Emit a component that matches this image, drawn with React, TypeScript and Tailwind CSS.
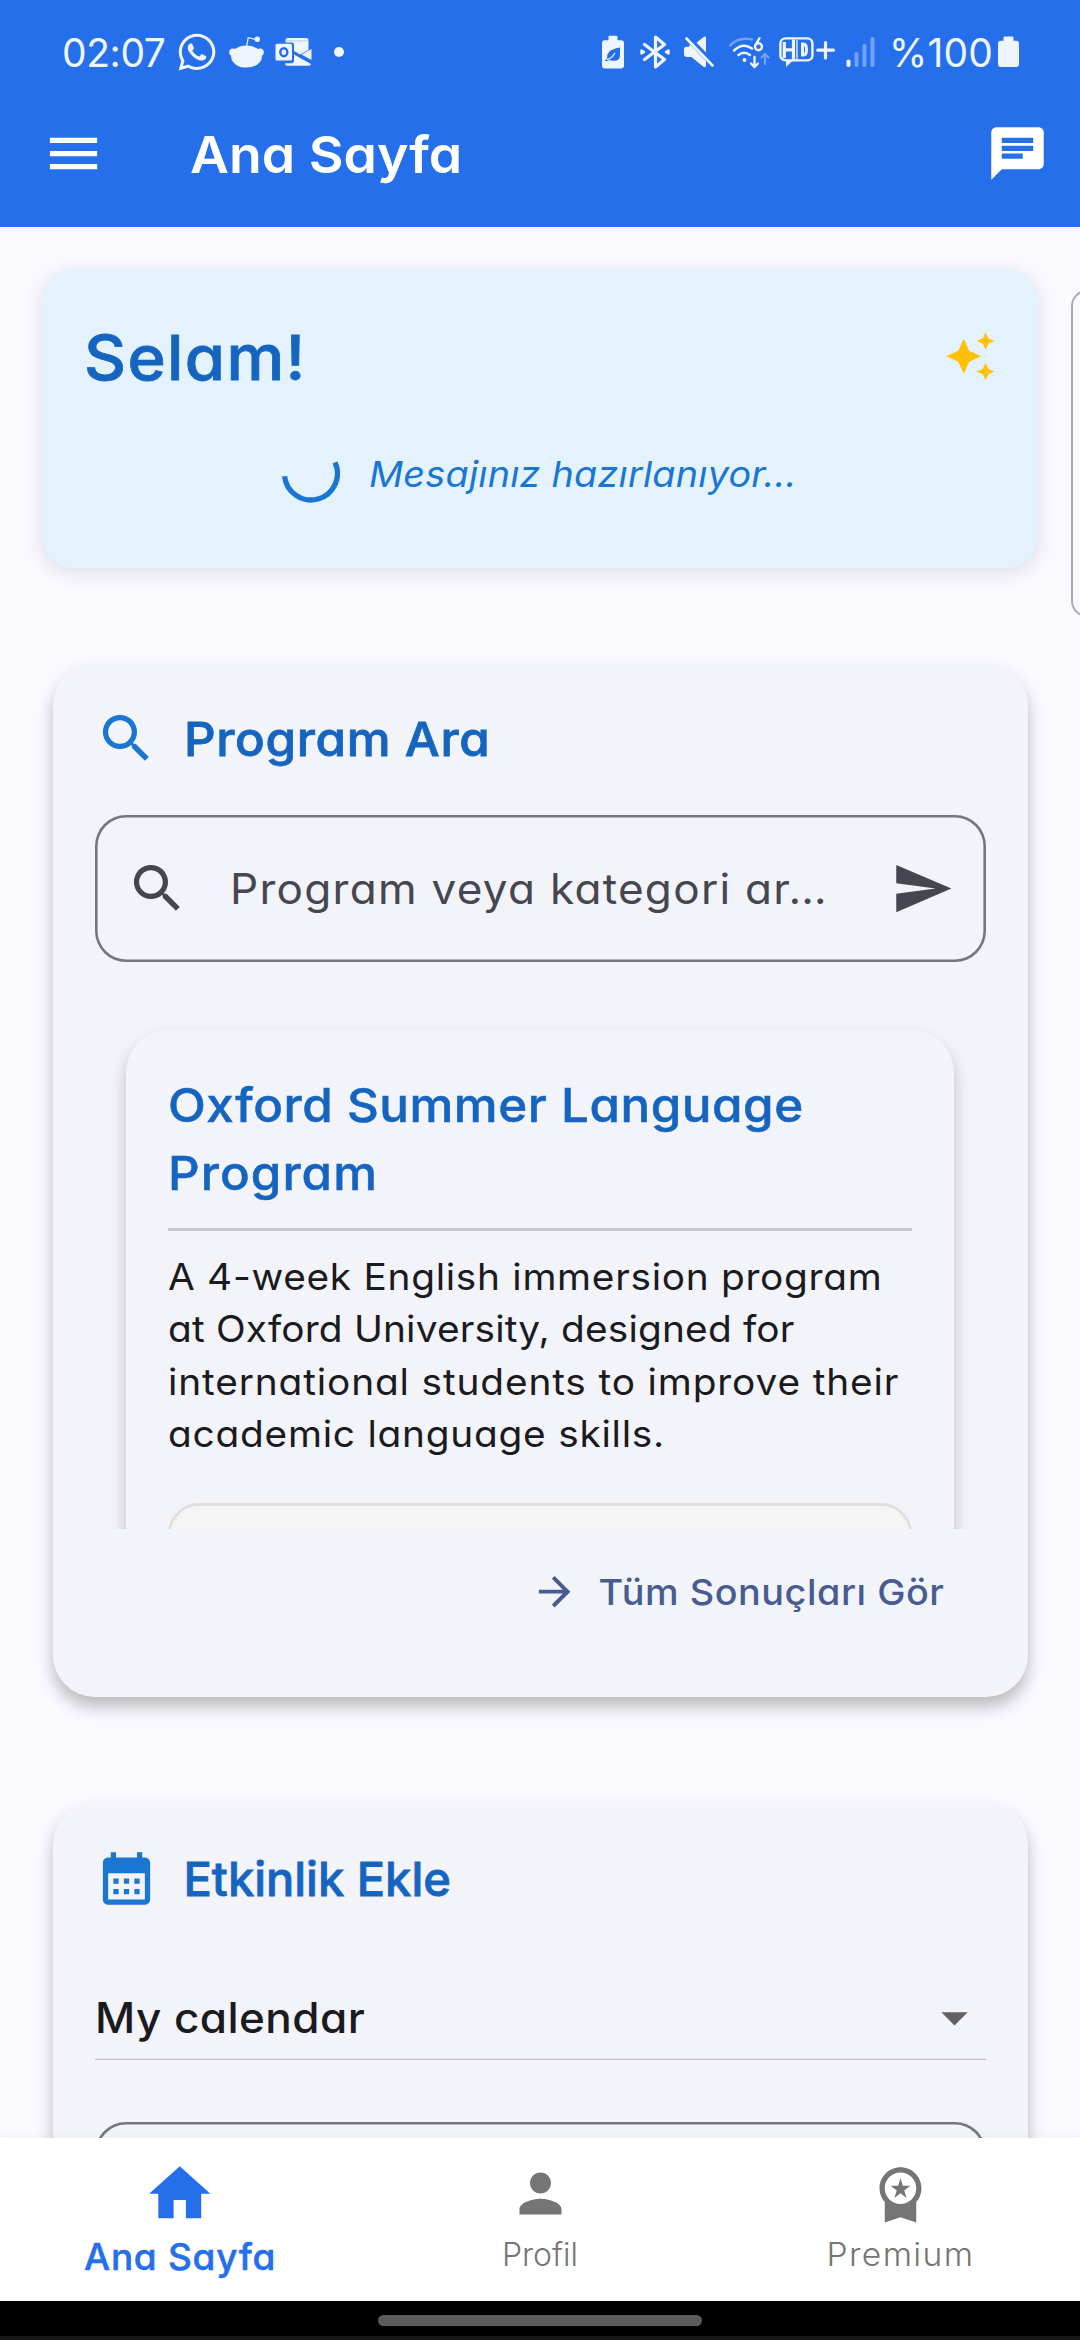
import type { ReactNode } from "react";
import {
  MdArrowDropDown,
  MdArrowForward,
  MdAutoAwesome,
  MdCalendarMonth,
  MdChat,
  MdHome,
  MdMenu,
  MdPerson,
  MdSearch,
  MdSend,
  MdWorkspacePremium,
} from "react-icons/md";
import { FaWhatsapp } from "react-icons/fa";

function RedditIcon() {
  return (
    <svg viewBox="0 0 35 32" className="ml-[11px] h-[32px] w-[35px]" fill="currentColor">
      <ellipse cx="17.5" cy="20.6" rx="15.4" ry="11" />
      <circle cx="4" cy="16.2" r="3.8" />
      <circle cx="31" cy="16.2" r="3.8" />
      <path d="M17.6 10.5 19.2 1.6 27.5 3.4" fill="none" stroke="currentColor" strokeWidth="1.2" />
      <circle cx="28.3" cy="3.3" r="2.7" />
    </svg>
  );
}

function OutlookIcon() {
  return (
    <svg viewBox="0 0 37 30" className="ml-[11px] h-[30px] w-[37px]">
      <path d="M12.500 1h19q2 0 2 2v10L25 17.500l-6-3.500V8q0-2.500-2.500-2.500h-6V3q0-2 2-2Z" fill="currentColor" />
      <path d="M10.500 3.800h23" stroke="#256feb" strokeOpacity="0.35" strokeWidth="0.8" />
      <rect x="0.500" y="6.800" width="16.500" height="16.800" rx="1.500" fill="currentColor" />
      <ellipse cx="8.800" cy="15.200" rx="3.500" ry="4" fill="none" stroke="#256feb" strokeWidth="2.400" />
      <path d="M36.500 12v11L26.500 17.500Z" fill="currentColor" />
      <path d="M19 17.500 36 27q-.5 1.800-2 1.800H12q-2-.2-2-2.600h6.500q2.500 0 2.500-2.700Z" fill="currentColor" />
    </svg>
  );
}

function BatterySaverIcon() {
  return (
    <svg viewBox="0 0 22 34" className="h-[34px] w-[22px]">
      <path d="M6.500 1.800q0-1 1-1h7q1 0 1 1v3.400h3.700q2.800 0 2.800 2.800v22.500q0 3-3 3H3q-3 0-3-3V8q0-2.800 2.800-2.800h3.700Z" fill="currentColor" />
      <path d="M18 12.500v7.500q0 5.800-5.500 5.800H9.500L8 25l-4 1.300L3 25.500l2-2q-.6-3.500 2-6.500 2.500-3 11-4.500Z" fill="#256feb" />
      <path d="M5 24.500q5-1 8-6.500" fill="none" stroke="currentColor" strokeWidth="1.300" />
    </svg>
  );
}

function BluetoothIcon() {
  return (
    <svg viewBox="0 0 30 34" className="ml-[16px] h-[34px] w-[30px]" fill="none" stroke="currentColor" strokeWidth="3.200" strokeLinejoin="round" strokeLinecap="round">
      <path d="M4.500 9.500 24.500 24.500 15.500 32V2L24.500 9.500 4.500 24.500" />
      <path d="M1.500 15.500v3L4 17Z M28.500 15.500v3L26 17Z" strokeWidth="2.400" fill="currentColor" />
    </svg>
  );
}

function MuteIcon() {
  return (
    <svg viewBox="0 0 30 32" className="ml-[14px] h-[32px] w-[30px]" fill="currentColor">
      <path d="M22 1.500v15L12.500 6.800 19.500 1Q21.500-.2 22 1.500Z" />
      <path d="M5.500 10.500 1.500 11Q0 11.500 0 13v5q0 3 3 3h4.500L19 30.500q2.500 1.500 3-.5V25L5.500 8Z" />
      <path d="M2.500 2.500 28.500 29.500" stroke="currentColor" strokeWidth="2.600" strokeLinecap="round" />
    </svg>
  );
}

function WifiIcon() {
  return (
    <svg viewBox="0 0 42 34" className="ml-[14px] h-[34px] w-[42px]" fill="none" stroke="currentColor" strokeLinecap="round">
      <path d="M2 10.500Q11 1.500 24 4.500" strokeWidth="2.500" strokeOpacity="0.38" />
      <path d="M6 15.500Q15 7 24 13.500" strokeWidth="2.500" />
      <path d="M10.500 20Q16 15.500 22 20" strokeWidth="2.500" />
      <circle cx="16.500" cy="25" r="1.900" fill="currentColor" stroke="none" />
      <circle cx="30.500" cy="11.800" r="3.500" strokeWidth="2.400" />
      <path d="M27.400 10 31.500 3.200" strokeWidth="2.400" />
      <path d="M26.500 22v9.500M23 28.500l3.500 3.500 3.500-3.500" strokeWidth="2.300" />
      <path d="M37 29v-9.500M33.500 22.500 37 19l3.500 3.500" strokeWidth="2.300" strokeOpacity="0.38" />
    </svg>
  );
}

function HdPlusIcon() {
  return (
    <svg viewBox="0 0 56 32" className="ml-[9px] h-[32px] w-[56px]" fill="none" stroke="currentColor">
      <rect x="1.400" y="2.400" width="32" height="22" rx="5" strokeWidth="2.400" />
      <path d="M5.300 6v16M14.500 3.500v20M5.300 13.800h9" strokeWidth="3.200" />
      <path d="M23.500 8h1q3 0 3 5.500t-3 5.500h-1Z" strokeWidth="3" />
      <path d="M18 4v20" strokeWidth="1.300" />
      <path d="M7 24.500v6.500l7-6.500Z" fill="currentColor" stroke="none" />
      <path d="M46.500 6.500v15.500M38.800 14.200h15.600" strokeWidth="3.200" strokeLinecap="round" />
    </svg>
  );
}

function SignalIcon() {
  return (
    <svg viewBox="0 0 29 32" className="ml-[11px] h-[32px] w-[29px]" fill="currentColor">
      <rect x="0.500" y="23.500" width="4" height="7.500" rx="1.800" />
      <g fillOpacity="0.38">
        <rect x="8.500" y="16" width="4" height="15" rx="1.800" />
        <rect x="16.500" y="8" width="4" height="23" rx="1.800" />
        <rect x="24.500" y="1" width="4" height="30" rx="1.800" />
      </g>
    </svg>
  );
}

function BatteryIcon() {
  return (
    <svg viewBox="0 0 21 32" className="ml-[6px] h-[32px] w-[21px]" fill="currentColor">
      <path d="M5.500 1.600q0-1 1-1h8q1 0 1 1v3.200h2.700q2.800 0 2.800 2.800v20.400q0 3-3 3H3q-3 0-3-3V7.600q0-2.800 2.800-2.800h2.700Z" />
    </svg>
  );
}

function Spinner() {
  return (
    <svg viewBox="0 0 58 58" className="size-[58px]" fill="none" stroke="#1976d2" strokeWidth="5.250">
      <path d="M2.600 31.300A26.500 26.500 0 1 0 53 17.300" />
    </svg>
  );
}

function StatusBar() {
  return (
    <div className="flex h-20 items-center pt-6 pr-[61px] pl-[62px] text-[39px] leading-none text-[#eef5fe]">
      <span className="w-[104px] tracking-[-0.4px] whitespace-nowrap">02:07</span>
      <FaWhatsapp className="ml-[10px] size-[42px]" />
      <RedditIcon />
      <OutlookIcon />
      <span className="ml-[22px] size-[10px] rounded-full bg-[#eef5fe]" />
      <div className="ml-auto flex items-center">
        <BatterySaverIcon />
        <BluetoothIcon />
        <MuteIcon />
        <WifiIcon />
        <HdPlusIcon />
        <SignalIcon />
        <span className="ml-[14px] w-[103px] tracking-[0.2px] whitespace-nowrap">%100</span>
        <BatteryIcon />
      </div>
    </div>
  );
}

function AppBar() {
  return (
    <div className="flex h-[147px] items-center px-[31px] pl-[42px] text-white">
      <MdMenu className="size-[63px]" />
      <h1 className="ml-[85px] origin-left scale-x-105 pt-0.5 text-[51px] leading-none font-semibold">Ana Sayfa</h1>
      <MdChat className="ml-auto size-[63px]" />
    </div>
  );
}

function Greeting() {
  return (
    <section className="flex pt-[42px] pl-[42px]">
      <div className="h-[299px] w-[996px] shrink-0 rounded-[31px] bg-[#e3f2fd] px-[42px] pt-[42px] shadow-[0_5px_20px_rgba(0,0,0,0.11)]">
        <div className="flex h-[94px] items-center justify-between">
          <h2 className="origin-left scale-x-105 text-[62px] leading-none font-medium tracking-[1.3px] text-[#1565c0] [-webkit-text-stroke:0.8px_#1565c0]">Selam!</h2>
          <MdAutoAwesome className="mb-1 size-[52.5px] text-[#ffc107]" />
        </div>
        <div className="mt-[39px] flex h-[60px] items-center gap-[29px] pl-[198px]">
          <Spinner />
          <p className="origin-left scale-x-105 text-[36px] leading-none tracking-[0.2px] whitespace-nowrap text-[#1976d2] italic">Mesajınız hazırlanıyor...</p>
        </div>
      </div>
      <div className="mt-[21px] ml-[33px] h-[327px] w-[400px] shrink-0 rounded-[16px] border-2 border-[#acacb0]" />
    </section>
  );
}

function Card({ className, children }: { className: string; children: ReactNode }) {
  return (
    <section className={`mx-[52.5px] rounded-[42px] bg-[#f3f3fa] px-[42px] pt-[44px] shadow-[0_10px_16px_rgba(0,0,0,0.25)] ${className}`}>
      {children}
    </section>
  );
}

function ProgramCard() {
  return (
    <Card className="mt-[46px] h-[1034px]">
      <div className="flex h-[63px] items-center gap-[26px]">
        <MdSearch className="size-[63px] text-[#1976d2]" />
        <h2 className="origin-left scale-x-105 text-[47px] leading-none font-medium tracking-[0.6px] text-[#1565c0] [-webkit-text-stroke:0.8px_#1565c0]">Program Ara</h2>
      </div>
      <div className="mt-[45px] flex h-[147px] items-center rounded-[31px] px-[31.5px] text-[#44474f] shadow-[inset_0_0_0_2.6px_#74777f]">
        <MdSearch className="size-[63px]" />
        <span className="ml-[41px] origin-left scale-x-105 text-[42px] leading-none tracking-[1.2px] whitespace-nowrap">Program veya kategori ar…</span>
        <MdSend className="ml-auto size-[63px]" />
      </div>
      <div className="mx-[-10px] h-[567px] overflow-hidden px-[41.5px] pt-[68px]">
        <article className="h-[700px] rounded-[42px] bg-[#f3f3fa] px-[42px] pt-[41px] shadow-[0_10px_16px_rgba(0,0,0,0.24)]">
          <h3 className="flex origin-left scale-x-105 flex-col text-[47px] leading-[68px] font-medium whitespace-nowrap text-[#1565c0] [-webkit-text-stroke:0.5px_#1565c0]">
            <span className="tracking-[0.5px]">Oxford Summer Language</span>
            <span className="tracking-[1px]">Program</span>
          </h3>
          <div className="mt-[21px] h-[3px] bg-[#c7c8d2]" />
          <p className="mt-[19.5px] flex origin-left scale-x-105 flex-col text-[37px] leading-[52.5px] whitespace-nowrap text-[#1a1b20]">
            <span className="tracking-[0.65px]">A 4-week English immersion program</span>
            <span className="tracking-[0.15px]">at Oxford University, designed for</span>
            <span className="tracking-[0.8px]">international students to improve their</span>
            <span className="tracking-[0.7px]">academic language skills.</span>
          </p>
          <div className="mt-[42px] h-[140px] rounded-[31px] border-[3px] border-[#e0e0e0] bg-[#f5f5f5]" />
        </article>
      </div>
      <div className="flex h-[126px] items-center justify-end gap-[37px] pr-[41px] text-[#475d92]">
        <MdArrowForward className="size-[47.25px]" />
        <span className="origin-right scale-x-105 text-[36px] leading-none font-medium tracking-[0.5px]">Tüm Sonuçları Gör</span>
      </div>
    </Card>
  );
}

function EventCard() {
  return (
    <Card className="mt-[105px] h-[600px]">
      <div className="flex h-[64px] items-center gap-[26px]">
        <MdCalendarMonth className="size-[63px] text-[#1976d2]" />
        <h2 className="text-[47px] leading-none font-medium text-[#1565c0] [-webkit-text-stroke:0.8px_#1565c0]">Etkinlik Ekle</h2>
      </div>
      <div className="mt-[76px] flex h-[63px] items-center justify-between">
        <span className="origin-left scale-x-105 text-[42px] leading-none font-medium tracking-[0.4px] text-[#1a1b20]">My calendar</span>
        <MdArrowDropDown className="size-[63px] text-[#616161]" />
      </div>
      <div className="mt-[9px] h-[2px] border-b border-[#c2c2c6] bg-[#e6e6ec]" />
      <div className="mt-[62px] h-[147px] rounded-[31px] shadow-[inset_0_0_0_2.6px_#74777f]" />
    </Card>
  );
}

function BottomNav() {
  return (
    <nav className="relative grid h-[163px] grid-cols-3 bg-white text-[#757575] shadow-[0_-2px_10px_rgba(0,0,0,0.03)]">
      <div className="flex flex-col items-center pt-[19px] text-[#256feb]">
        <MdHome className="size-[73.5px]" />
        <span className="mt-[7px] text-[37px] leading-[38px] font-medium tracking-[0.7px] [-webkit-text-stroke:0.5px_#256feb]">Ana Sayfa</span>
      </div>
      <div className="flex flex-col items-center pt-[24px]">
        <MdPerson className="size-[63px]" />
        <span className="mt-[13px] text-[32px] leading-[34px] font-light">Profil</span>
      </div>
      <div className="flex flex-col items-center pt-[24px]">
        <MdWorkspacePremium className="size-[63px]" />
        <span className="mt-[13px] scale-x-105 text-[32px] leading-[34px] font-light tracking-[1.3px]">Premium</span>
      </div>
    </nav>
  );
}

export default function App() {
  return (
    <div className="flex h-[2340px] w-[1080px] flex-col overflow-hidden bg-[#f9f9ff] font-['Inter',sans-serif] [font-feature-settings:'cv11'_1]">
      <header className="h-[227px] shrink-0 bg-[#256feb]">
        <StatusBar />
        <AppBar />
      </header>
      <main className="h-[1911px] shrink-0 overflow-hidden">
        <Greeting />
        <ProgramCard />
        <EventCard />
      </main>
      <BottomNav />
      <footer className="flex h-[39px] shrink-0 flex-col items-center border-b-4 border-[#17181a] bg-black pt-[14px]">
        <div className="h-[11px] w-[324px] rounded-full bg-[#5c5c5c]" />
      </footer>
    </div>
  );
}
